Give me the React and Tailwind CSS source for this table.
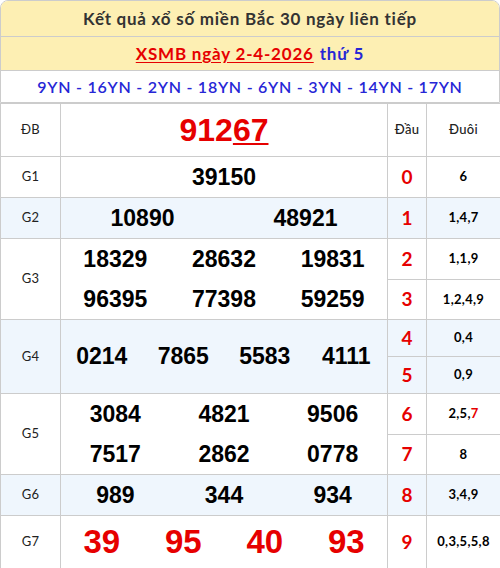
import React from "react";

const geo = { fontFamily: "Lato, 'Noto Sans', sans-serif" };
const arial = { fontFamily: "'Liberation Sans', Arial, sans-serif" };

function Nums({ items, cols, big, red }) {
  const colClass = { 1: "grid-cols-1", 2: "grid-cols-2", 3: "grid-cols-3", 4: "grid-cols-4" }[cols];
  return (
    <div className={`grid ${colClass} h-full items-center`}>
      {items.map((n, i) => (
        <div
          key={i}
          style={arial}
          className={`text-center font-bold ${big ? "text-[33px]" : "text-[23px]"} ${red ? "text-[#e60000]" : "text-black"}`}
        >
          {n}
        </div>
      ))}
    </div>
  );
}

const td = "border border-[#cccccc] p-0";

function Dau({ v }) {
  return (
    <td className={`${td} text-center text-[19px] font-bold text-[#e60000]`} style={geo}>
      {v}
    </td>
  );
}

function Duoi({ children }) {
  return (
    <td className={`${td} text-center text-[13px] font-bold text-black tracking-[0.3px]`} style={geo}>
      {children}
    </td>
  );
}

function Label({ children, rowSpan }) {
  return (
    <td rowSpan={rowSpan} className={`${td} text-center text-[13px] text-[#222] tracking-[0.3px]`} style={geo}>
      {children}
    </td>
  );
}

export default function App() {
  return (
    <div className="w-[500px] bg-white">
      <div className="border border-[#cccccc] rounded-t-lg overflow-hidden">
        <div
          className="h-[35px] bg-[#fdefb3] flex items-center justify-center text-[17px] font-bold text-[#333] tracking-[0.75px]"
          style={geo}
        >
          Kết quả xổ số miền Bắc 30 ngày liên tiếp
        </div>
        <div
          className="h-[34px] bg-[#fdefb3] border-t border-[#cccccc] flex items-center justify-center text-[17px] font-bold gap-[6px] tracking-[0.8px]"
          style={geo}
        >
          <span className="text-[#e60000] underline underline-offset-2">XSMB ngày 2-4-2026</span>
          <span className="text-[#2626d6]">thứ 5</span>
        </div>
        <div
          className="h-[32px] border-t border-[#cccccc] flex items-center justify-center text-[16px] font-semibold text-[#2626d6] tracking-[0.75px]"
          style={geo}
        >
          9YN - 16YN - 2YN - 18YN - 6YN - 3YN - 14YN - 17YN
        </div>
      </div>
      <table className="w-[500px] border-collapse table-fixed">
        <colgroup>
          <col className="w-[60px]" />
          <col className="w-[327px]" />
          <col className="w-[39px]" />
          <col className="w-[74px]" />
        </colgroup>
        <tbody>
          <tr className="h-[53px]">
            <Label>ĐB</Label>
            <td className={td}>
              <div style={arial} className="text-center font-bold text-[32px] text-[#e60000]">
                912<span className="underline underline-offset-2 decoration-2">67</span>
              </div>
            </td>
            <td className={`${td} text-center text-[13px] font-medium text-[#222] tracking-[0.3px]`} style={geo}>Đầu</td>
            <td className={`${td} text-center text-[13px] font-medium text-[#222] tracking-[0.3px]`} style={geo}>Đuôi</td>
          </tr>
          <tr className="h-[41px]">
            <Label>G1</Label>
            <td className={td}><Nums items={["39150"]} cols={1} /></td>
            <Dau v="0" />
            <Duoi>6</Duoi>
          </tr>
          <tr className="h-[41px] bg-[#eff6fd]">
            <Label>G2</Label>
            <td className={td}><Nums items={["10890", "48921"]} cols={2} /></td>
            <Dau v="1" />
            <Duoi>1,4,7</Duoi>
          </tr>
          <tr className="h-[41px]">
            <Label rowSpan={2}>G3</Label>
            <td rowSpan={2} className={td}>
              <div className="flex flex-col">
                <div className="h-[40px]"><Nums items={["18329", "28632", "19831"]} cols={3} /></div>
                <div className="h-[40px]"><Nums items={["96395", "77398", "59259"]} cols={3} /></div>
              </div>
            </td>
            <Dau v="2" />
            <Duoi>1,1,9</Duoi>
          </tr>
          <tr className="h-[40px]">
            <Dau v="3" />
            <Duoi>1,2,4,9</Duoi>
          </tr>
          <tr className="h-[37px] bg-[#eff6fd]">
            <Label rowSpan={2}>G4</Label>
            <td rowSpan={2} className={td}>
              <Nums items={["0214", "7865", "5583", "4111"]} cols={4} />
            </td>
            <Dau v="4" />
            <Duoi>0,4</Duoi>
          </tr>
          <tr className="h-[37px] bg-[#eff6fd]">
            <Dau v="5" />
            <Duoi>0,9</Duoi>
          </tr>
          <tr className="h-[41px]">
            <Label rowSpan={2}>G5</Label>
            <td rowSpan={2} className={td}>
              <div className="flex flex-col">
                <div className="h-[40px]"><Nums items={["3084", "4821", "9506"]} cols={3} /></div>
                <div className="h-[40px]"><Nums items={["7517", "2862", "0778"]} cols={3} /></div>
              </div>
            </td>
            <Dau v="6" />
            <Duoi>
              2,5,<span className="text-[#e60000]">7</span>
            </Duoi>
          </tr>
          <tr className="h-[40px]">
            <Dau v="7" />
            <Duoi>8</Duoi>
          </tr>
          <tr className="h-[41px] bg-[#eff6fd]">
            <Label>G6</Label>
            <td className={td}><Nums items={["989", "344", "934"]} cols={3} /></td>
            <Dau v="8" />
            <Duoi>3,4,9</Duoi>
          </tr>
          <tr className="h-[53px]">
            <Label>G7</Label>
            <td className={td}><Nums items={["39", "95", "40", "93"]} cols={4} big red /></td>
            <Dau v="9" />
            <Duoi>0,3,5,5,8</Duoi>
          </tr>
        </tbody>
      </table>
    </div>
  );
}
